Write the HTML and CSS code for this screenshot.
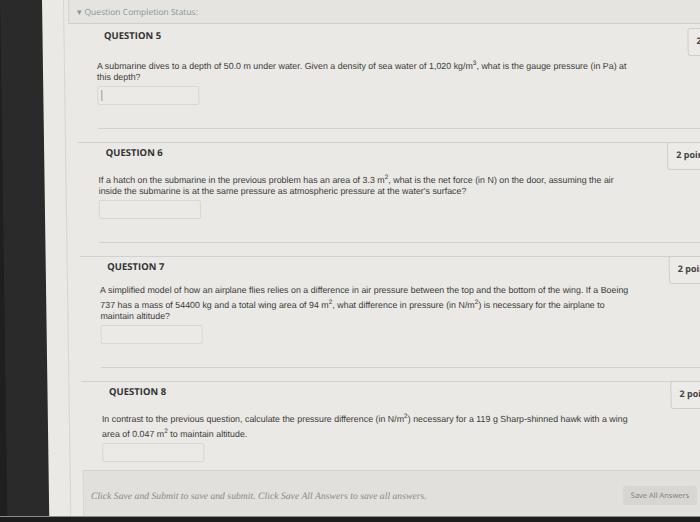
FILE: index.html
```html
<!DOCTYPE html>
<html lang="en">
<head>
<meta charset="utf-8">
<title>Question Completion Status</title>
<link rel="stylesheet" href="styles.css">
</head>
<body>
<div class="screen">
  <div class="bezel"></div>
  <div class="page">
    <div class="frame">
      <div class="status"><span class="status-caret">▾</span> Question Completion Status:</div>

      <section class="question question--first">
        <div class="qtop">
          <h2 class="qtitle">QUESTION 5</h2>
          <div class="points points--shifted">2 points</div>
        </div>
        <div class="qbody">
          <p class="qtext">A submarine dives to a depth of 50.0 m under water. Given a density of sea water of 1,020 kg/m<sup>3</sup>, what is the gauge pressure (in Pa) at this depth?</p>
          <div class="answer"><span class="caret"></span></div>
        </div>
        <div class="qrule"></div>
      </section>

      <section class="question">
        <div class="qtop">
          <h2 class="qtitle">QUESTION 6</h2>
          <div class="points">2 points</div>
        </div>
        <div class="qbody">
          <p class="qtext">If a hatch on the submarine in the previous problem has an area of 3.3 m<sup>2</sup>, what is the net force (in N) on the door, assuming the air inside the submarine is at the same pressure as atmospheric pressure at the water's surface?</p>
          <div class="answer"></div>
        </div>
        <div class="qrule"></div>
      </section>

      <section class="question">
        <div class="qtop">
          <h2 class="qtitle">QUESTION 7</h2>
          <div class="points">2 points</div>
        </div>
        <div class="qbody">
          <p class="qtext">A simplified model of how an airplane flies relies on a difference in air pressure between the top and the bottom of the wing. If a Boeing 737 has a mass of 54400 kg and a total wing area of 94 m<sup>2</sup>, what difference in pressure (in N/m<sup>2</sup>) is necessary for the airplane to maintain altitude?</p>
          <div class="answer"></div>
        </div>
        <div class="qrule"></div>
      </section>

      <section class="question question--last">
        <div class="qtop">
          <h2 class="qtitle">QUESTION 8</h2>
          <div class="points">2 points</div>
        </div>
        <div class="qbody">
          <p class="qtext">In contrast to the previous question, calculate the pressure difference (in N/m<sup>2</sup>) necessary for a 119 g Sharp-shinned hawk with a wing area of 0.047 m<sup>2</sup> to maintain altitude.</p>
          <div class="answer"></div>
        </div>
      </section>

      <div class="footer">
        <span class="footer-note">Click Save and Submit to save and submit. Click Save All Answers to save all answers.</span>
        <button class="save-btn" type="button">Save All Answers</button>
      </div>
    </div>
  </div>
</div>
<div class="bottom-bezel"></div>
</body>
</html>
```
FILE: styles.css
```css
html, body {
  margin: 0;
  padding: 0;
  width: 700px;
  height: 522px;
  overflow: hidden;
  background: #1f1f1f;
}

.screen {
  display: flex;
  height: 516px;
  overflow: hidden;
  transform: skewX(0.8deg);
  transform-origin: 0 0;
}

.bezel {
  flex: none;
  width: 42px;
  background: #2a2a2a;
}

.page {
  flex: none;
  width: 720px;
  padding-left: 21px;
  background: #eae9e5;
}

.frame {
  width: 657px;
  height: 100%;
  padding-left: 4px;
  border-left: 1px solid #d6d5d1;
}

.status {
  height: 23px;
  padding-left: 8px;
  border-left: 1px solid #d3d2ce;
  border-bottom: 1px solid #cfcec9;
  background: #e5e4e0;
  font: 8.5px/23px "Open Sans", sans-serif;
  color: #8a939b;
}

.status-caret {
  font-size: 9px;
}

.question {
  width: 649px;
  margin-left: 8px;
  border-top: 1px solid #d2d1cd;
}

.question--first {
  border-top: none;
}

.qtop {
  display: flex;
  align-items: flex-start;
}

.qtitle {
  flex: 1;
  margin: 0;
  padding: 4px 0 0 27.5px;
  font: 700 9.5px/11px "Open Sans", sans-serif;
  color: #333333;
}

.question--first .qtitle {
  padding-top: 6px;
}

.points {
  flex: none;
  box-sizing: border-box;
  width: 60px;
  height: 28px;
  margin-top: -1px;
  padding: 6px 0 0 8px;
  border: 1px solid #cfcec9;
  border-radius: 3px;
  background: #ecebe8;
  font: 700 9px/11px "Open Sans", sans-serif;
  color: #444444;
  white-space: nowrap;
  overflow: hidden;
}

.points--shifted {
  margin-top: 4px;
  margin-right: -22px;
}

.qbody {
  padding-left: 20px;
}

.qtext {
  max-width: 538px;
  margin: 1px 0 0;
  font: 8.9px/11px "Liberation Sans", Arial, sans-serif;
  color: #3c3c3c;
}

.qtext sup {
  font-size: 6.5px;
}

.answer {
  box-sizing: border-box;
  display: flex;
  align-items: center;
  width: 102px;
  height: 19px;
  margin-top: 3px;
  padding-left: 3px;
  border: 1px solid #d8d7d3;
  border-radius: 2px;
  background: #ebeae6;
}

.caret {
  width: 1px;
  height: 11px;
  background: #9a9a9a;
}

.qrule {
  margin: 23px 0 13px 20px;
  border-top: 1px solid #d2d1cd;
}

.question--first .qrule {
  margin-top: 23px;
}

.footer {
  box-sizing: border-box;
  display: flex;
  align-items: center;
  justify-content: space-between;
  height: 46px;
  margin: 8px 25px 0 8px;
  padding: 4px 10px 0 7px;
  border-top: 1px solid #d3d2ce;
  border-left: 1px solid #d8d7d3;
  background: #e1e0dc;
}

.footer-note {
  font: italic 9.7px "Liberation Serif", "Times New Roman", serif;
  color: #8a8a8a;
}

.save-btn {
  width: 74px;
  height: 19px;
  padding: 0;
  border: none;
  border-radius: 2px;
  background: #d7d6d3;
  font: 7.5px "Open Sans", sans-serif;
  color: #7a7a7a;
}

.bottom-bezel {
  height: 6px;
  border-top: 1px solid #8d8d8d;
  background: #1d1d1d;
}
```
